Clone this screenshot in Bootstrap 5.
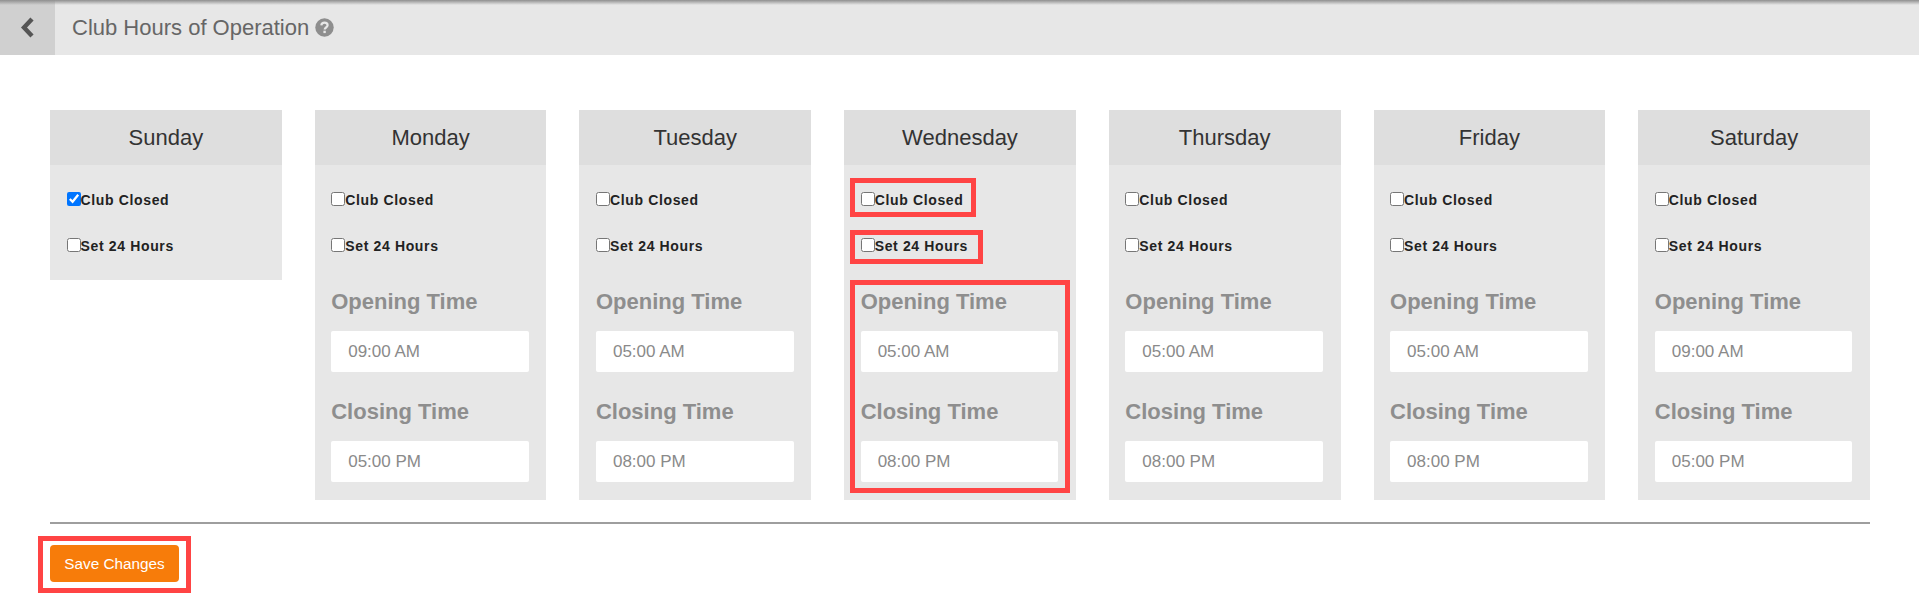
<!DOCTYPE html>
<html lang="en">
<head>
<meta charset="utf-8">
<title>Club Hours of Operation</title>
<link href="https://cdn.jsdelivr.net/npm/bootstrap@5.3.0/dist/css/bootstrap.min.css" rel="stylesheet">
<style>
html,body{height:100%}
body{font-family:"Liberation Sans",Arial,sans-serif;background:#fff;color:#333;overflow:hidden}
.topbar{height:55px;background:#e7e7e7;position:relative}
.topbar::before{content:"";position:absolute;left:0;right:0;top:0;height:5px;background:linear-gradient(#8f8f8f,rgba(231,231,231,0))}
.backbtn{width:55px;height:55px;background:#d0d0d0}
.pagetitle{font-size:22px;color:#666;margin-left:17px;line-height:55px}
.helpicon{margin-left:6px}
.wrap{padding:55px 49px 0 50px}
.dayrow{display:grid;grid-template-columns:repeat(7,1fr);column-gap:33px;align-items:start}
.daycol{background:#e7e7e7;position:relative}
.dayhead{height:55px;background:#dedede;font-size:22px;line-height:55px;text-align:center;color:#333}
.daybody{padding:0 17.5px 0 16.5px}
.sunbody{padding-bottom:10px}
.chkline{display:flex;align-items:center;height:47px;font-size:14px;font-weight:700;letter-spacing:.65px;color:#222;margin:0}
.chkline input{width:14px;height:14px;margin:0 0 3px;flex:none}
.firstline{padding-top:12px;height:58px;margin-bottom:0}
.fieldhead{font-size:22px;font-weight:700;color:#8e8e8e;line-height:24px;margin:0;padding-top:20px}
.timebox{height:41px;border:0;border-radius:2px;background:#fff;color:#8a8a8a;font-size:17px;padding:0 17px;margin-top:17px;box-shadow:none}
.timebox:disabled,.timebox[readonly]{background:#fff}
.closehead{padding-top:28px}
.timeend{margin-bottom:18px}
.redbox{position:absolute;border:5px solid #ff4444;pointer-events:none}
.rb1{left:6px;top:68px;width:126px;height:39px}
.rb2{left:6px;top:120px;width:133px;height:34px}
.rb3{left:6px;top:170px;width:220px;height:213px}
.divider{margin:22px 0 0;border:0;border-top:2px solid #9e9e9e;opacity:1}
.savewrap{position:relative;margin-top:21px;width:129px}
.savebtn{width:129px;height:37px;background:#f77c0a;border:0;border-radius:4px;color:#fff;font-size:15.3px;padding:1px 0 0}
.rb4{left:-12px;top:-9px;width:153px;height:57px}
</style>
</head>
<body>
<div class="topbar d-flex align-items-center">
  <div class="backbtn d-flex align-items-center justify-content-center">
    <svg width="15" height="21" viewBox="0 0 15 21"><polyline points="12,2 4,10.5 12,19" fill="none" stroke="#555" stroke-width="4.4"/></svg>
  </div>
  <span class="pagetitle">Club Hours of Operation</span>
  <svg class="helpicon" width="19" height="19" viewBox="0 0 19 19"><circle cx="9.5" cy="9.5" r="9.2" fill="#8e8e8e"/><path d="M6.3 7.3c.2-1.7 1.5-2.6 3.2-2.6 1.8 0 3.1 1 3.1 2.6 0 2.2-2.9 2.2-2.9 4.2" fill="none" stroke="#e7e7e7" stroke-width="2.2"/><rect x="8.4" y="12.7" width="2.4" height="2.4" fill="#e7e7e7"/></svg>
</div>
<div class="wrap">
  <div class="dayrow">
    <div class="daycol">
      <div class="dayhead">Sunday</div>
      <div class="daybody sunbody">
        <label class="chkline firstline"><input type="checkbox" checked>Club Closed</label>
        <label class="chkline">
          <input type="checkbox">Set 24 Hours</label>
      </div>
    </div>
    <div class="daycol">
      <div class="dayhead">Monday</div>
      <div class="daybody">
        <label class="chkline firstline"><input type="checkbox">Club Closed</label>
        <label class="chkline"><input type="checkbox">Set 24 Hours</label>
        <div class="fieldhead">Opening Time</div>
        <input class="form-control timebox" value="09:00 AM" readonly>
        <div class="fieldhead closehead">Closing Time</div>
        <input class="form-control timebox timeend" value="05:00 PM" readonly>
      </div>
    </div>
    <div class="daycol">
      <div class="dayhead">Tuesday</div>
      <div class="daybody">
        <label class="chkline firstline"><input type="checkbox">Club Closed</label>
        <label class="chkline"><input type="checkbox">Set 24 Hours</label>
        <div class="fieldhead">Opening Time</div>
        <input class="form-control timebox" value="05:00 AM" readonly>
        <div class="fieldhead closehead">Closing Time</div>
        <input class="form-control timebox timeend" value="08:00 PM" readonly>
      </div>
    </div>
    <div class="daycol">
      <div class="dayhead">Wednesday</div>
      <div class="daybody">
        <label class="chkline firstline"><input type="checkbox">Club Closed</label>
        <label class="chkline"><input type="checkbox">Set 24 Hours</label>
        <div class="fieldhead">Opening Time</div>
        <input class="form-control timebox" value="05:00 AM" readonly>
        <div class="fieldhead closehead">Closing Time</div>
        <input class="form-control timebox timeend" value="08:00 PM" readonly>
      </div>
      <div class="redbox rb1"></div>
      <div class="redbox rb2"></div>
      <div class="redbox rb3"></div>
    </div>
    <div class="daycol">
      <div class="dayhead">Thursday</div>
      <div class="daybody">
        <label class="chkline firstline"><input type="checkbox">Club Closed</label>
        <label class="chkline"><input type="checkbox">Set 24 Hours</label>
        <div class="fieldhead">Opening Time</div>
        <input class="form-control timebox" value="05:00 AM" readonly>
        <div class="fieldhead closehead">Closing Time</div>
        <input class="form-control timebox timeend" value="08:00 PM" readonly>
      </div>
    </div>
    <div class="daycol">
      <div class="dayhead">Friday</div>
      <div class="daybody">
        <label class="chkline firstline"><input type="checkbox">Club Closed</label>
        <label class="chkline"><input type="checkbox">Set 24 Hours</label>
        <div class="fieldhead">Opening Time</div>
        <input class="form-control timebox" value="05:00 AM" readonly>
        <div class="fieldhead closehead">Closing Time</div>
        <input class="form-control timebox timeend" value="08:00 PM" readonly>
      </div>
    </div>
    <div class="daycol">
      <div class="dayhead">Saturday</div>
      <div class="daybody">
        <label class="chkline firstline"><input type="checkbox">Club Closed</label>
        <label class="chkline"><input type="checkbox">Set 24 Hours</label>
        <div class="fieldhead">Opening Time</div>
        <input class="form-control timebox" value="09:00 AM" readonly>
        <div class="fieldhead closehead">Closing Time</div>
        <input class="form-control timebox timeend" value="05:00 PM" readonly>
      </div>
    </div>
  </div>
  <hr class="divider">
  <div class="savewrap">
    <button type="button" class="btn savebtn">Save Changes</button>
    <div class="redbox rb4"></div>
  </div>
</div>
<script src="https://cdn.jsdelivr.net/npm/bootstrap@5.3.0/dist/js/bootstrap.bundle.min.js"></script>
</body>
</html>
